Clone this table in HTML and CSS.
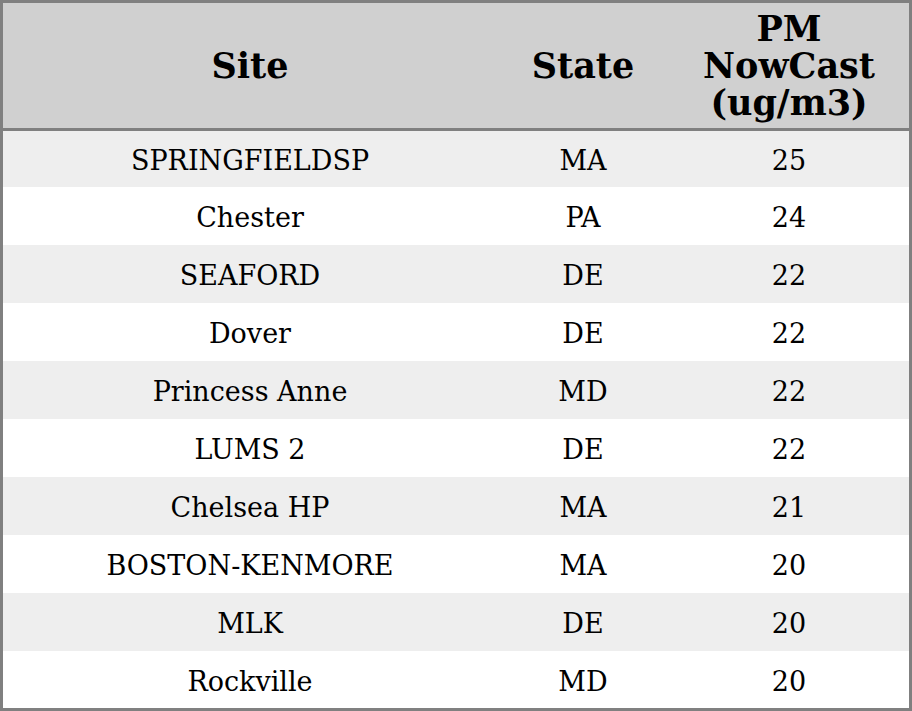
FILE: index.html
```html
<!DOCTYPE html>
<html>
<head>
<meta charset="utf-8">
<link rel="stylesheet" href="styles.css">
</head>
<body>
<table class="aq-table">
  <thead>
    <tr class="head-row">
      <th class="col-site">Site</th>
      <th class="col-state">State</th>
      <th class="col-pm">PM<br>NowCast<br>(ug/m3)</th>
    </tr>
  </thead>
  <tbody>
    <tr class="row r-first"><td>SPRINGFIELDSP</td><td>MA</td><td>25</td></tr>
    <tr class="row"><td>Chester</td><td>PA</td><td>24</td></tr>
    <tr class="row"><td>SEAFORD</td><td>DE</td><td>22</td></tr>
    <tr class="row"><td>Dover</td><td>DE</td><td>22</td></tr>
    <tr class="row"><td>Princess Anne</td><td>MD</td><td>22</td></tr>
    <tr class="row"><td>LUMS 2</td><td>DE</td><td>22</td></tr>
    <tr class="row"><td>Chelsea HP</td><td>MA</td><td>21</td></tr>
    <tr class="row"><td>BOSTON-KENMORE</td><td>MA</td><td>20</td></tr>
    <tr class="row"><td>MLK</td><td>DE</td><td>20</td></tr>
    <tr class="row r-last"><td>Rockville</td><td>MD</td><td>20</td></tr>
  </tbody>
</table>
</body>
</html>
```

FILE: styles.css
```css
html, body {
  margin: 0;
  padding: 0;
  background: #ffffff;
}

.aq-table {
  width: 912px;
  border-collapse: separate;
  border-spacing: 0;
  border: 3px solid #808080;
  font-family: "DejaVu Serif", serif;
  color: #000;
  table-layout: fixed;
}

.col-site { width: 494px; }
.col-state { width: 172px; }
.col-pm { width: auto; }

.head-row th {
  background: #d0d0d0;
  font-weight: bold;
  font-size: 35px;
  line-height: 37px;
  height: 125px;
  padding: 0;
  text-align: center;
  vertical-align: middle;
  border-bottom: 3px solid #808080;
}

.row td {
  font-size: 27px;
  line-height: 30px;
  height: 54px;
  padding: 4px 0 0;
  text-align: center;
  vertical-align: middle;
}

.row.r-first td { height: 52px; }
.row.r-last td { height: 53px; }

.row:nth-child(odd) td { background: #eeeeee; }
.row:nth-child(even) td { background: #ffffff; }
```
